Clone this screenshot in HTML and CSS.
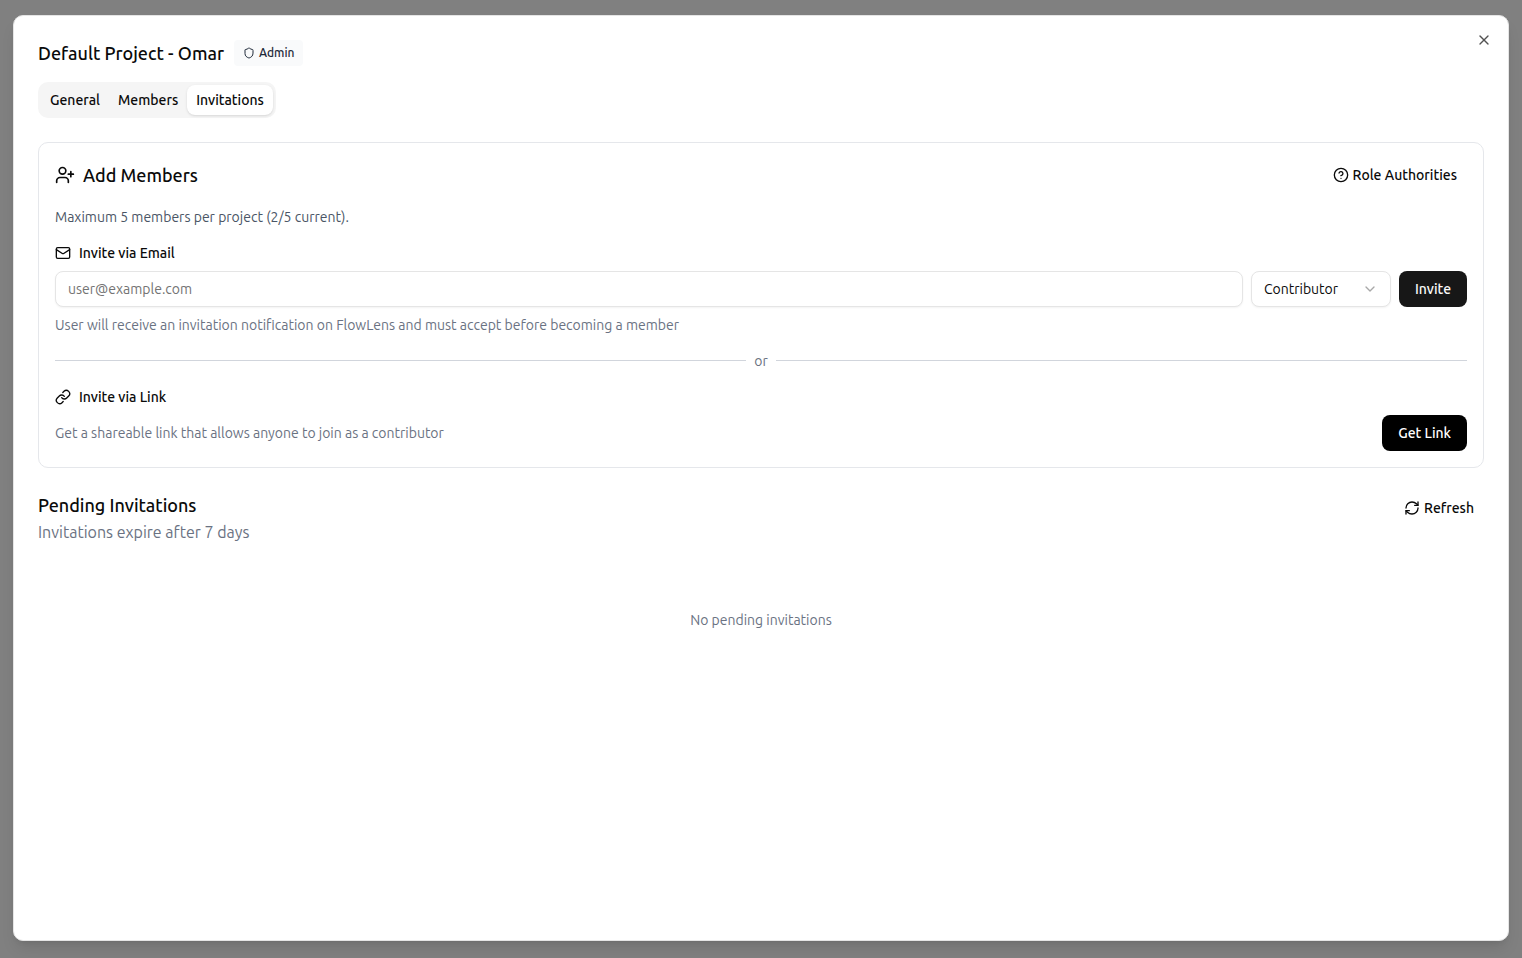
FILE: index.html
```
<!DOCTYPE html>
<html lang="en">
<head>
	<meta charset="UTF-8">
	<meta name="viewport" content="width=device-width, initial-scale=1">
	<title>Project settings</title>
	<link rel="stylesheet" href="styles.css">
</head>
<body>
	<div class="overlay">
		<main class="dialog" role="dialog" aria-labelledby="dialog-title">
			<button class="close" type="button" aria-label="Close">
				<svg class="icon" viewBox="0 0 24 24"><path d="M18 6 6 18"/><path d="m6 6 12 12"/></svg>
			</button>

			<header class="dialog-header">
				<h1 class="title" id="dialog-title">Default Project - Omar</h1>
				<span class="badge">
					<svg class="icon icon-xs" viewBox="0 0 24 24"><path d="M20 13c0 5-3.5 7.5-7.66 8.95a1 1 0 0 1-.67-.01C7.5 20.5 4 18 4 13V6a1 1 0 0 1 1-1c2 0 4.5-1.2 6.24-2.72a1.17 1.17 0 0 1 1.52 0C14.51 3.81 17 5 19 5a1 1 0 0 1 1 1z"/></svg>
					Admin
				</span>
			</header>

			<div class="tabs" role="tablist">
				<button class="tab" type="button" role="tab" aria-selected="false">General</button>
				<button class="tab" type="button" role="tab" aria-selected="false">Members</button>
				<button class="tab active" type="button" role="tab" aria-selected="true">Invitations</button>
			</div>

			<section class="card">
				<div class="card-header">
					<h2 class="title title-icon">
						<svg class="icon icon-lg" viewBox="0 0 24 24"><path d="M16 21v-2a4 4 0 0 0-4-4H6a4 4 0 0 0-4 4v2"/><circle cx="9" cy="7" r="4"/><path d="M19 8v6"/><path d="M22 11h-6"/></svg>
						Add Members
					</h2>
					<button class="btn btn-ghost" type="button">
						<svg class="icon" viewBox="0 0 24 24"><circle cx="12" cy="12" r="10"/><path d="M9.09 9a3 3 0 0 1 5.83 1c0 2-3 3-3 3"/><path d="M12 17h.01"/></svg>
						Role Authorities
					</button>
				</div>

				<p class="limit">Maximum 5 members per project (2/5 current).</p>

				<form class="group">
					<label class="label" for="email">
						<svg class="icon" viewBox="0 0 24 24"><rect x="2" y="4" width="20" height="16" rx="2"/><path d="m22 7-8.97 5.7a1.94 1.94 0 0 1-2.06 0L2 7"/></svg>
						Invite via Email
					</label>
					<div class="row">
						<input class="input" id="email" type="email" placeholder="user@example.com">
						<div class="select">
							<select aria-label="Role">
								<option>Contributor</option>
								<option>Admin</option>
							</select>
							<svg class="icon chevron" viewBox="0 0 24 24"><path d="m6 9 6 6 6-6"/></svg>
						</div>
						<button class="btn btn-primary" type="button">Invite</button>
					</div>
					<p class="hint">User will receive an invitation notification on FlowLens and must accept before becoming a member</p>
				</form>

				<div class="divider">or</div>

				<div class="group">
					<h3 class="label">
						<svg class="icon" viewBox="0 0 24 24"><path d="M10 13a5 5 0 0 0 7.54.54l3-3a5 5 0 0 0-7.07-7.07l-1.72 1.71"/><path d="M14 11a5 5 0 0 0-7.54-.54l-3 3a5 5 0 0 0 7.07 7.07l1.71-1.71"/></svg>
						Invite via Link
					</h3>
					<div class="row row-between">
						<p class="hint">Get a shareable link that allows anyone to join as a contributor</p>
						<button class="btn btn-black" type="button">Get Link</button>
					</div>
				</div>
			</section>

			<section class="pending">
				<div class="pending-header">
					<div>
						<h2 class="title">Pending Invitations</h2>
						<p class="subtitle">Invitations expire after 7 days</p>
					</div>
					<button class="btn btn-ghost" type="button">
						<svg class="icon" viewBox="0 0 24 24"><path d="M3 12a9 9 0 0 1 9-9 9.75 9.75 0 0 1 6.74 2.74L21 8"/><path d="M21 3v5h-5"/><path d="M21 12a9 9 0 0 1-9 9 9.75 9.75 0 0 1-6.74-2.74L3 16"/><path d="M8 16H3v5"/></svg>
						Refresh
					</button>
				</div>
				<p class="empty">No pending invitations</p>
			</section>
		</main>
	</div>
</body>
</html>
```
FILE: styles.css
```
* {
	box-sizing: border-box;
	margin: 0;
	padding: 0;
}
body {
	font-family: Ubuntu, "Noto Sans", sans-serif;
	font-size: 14px;
	line-height: 20px;
	color: #0a0a0a;
}
button, input, select {
	font: inherit;
	color: inherit;
}
button {
	border: 0;
	background: none;
	cursor: pointer;
}

.overlay {
	display: flex;
	min-height: 100vh;
	padding: 15px 13px 17px;
	background: #808080;
}
.dialog {
	position: relative;
	flex: 1;
	min-width: 0;
	padding: 24px;
	background: #fff;
	border: 1px solid #e5e5e5;
	border-radius: 10px;
	box-shadow: 0 10px 15px -3px rgba(0, 0, 0, .1), 0 4px 6px -4px rgba(0, 0, 0, .1);
}
.close {
	position: absolute;
	top: 16px;
	right: 16px;
	width: 16px;
	height: 16px;
	opacity: .7;
}

.icon {
	display: block;
	flex: none;
	width: 16px;
	height: 16px;
	fill: none;
	stroke: currentColor;
	stroke-width: 2;
	stroke-linecap: round;
	stroke-linejoin: round;
}
.icon-xs {
	width: 12px;
	height: 12px;
}
.icon-lg {
	width: 20px;
	height: 20px;
}

.dialog-header {
	display: flex;
	align-items: center;
	gap: 10px;
	margin-bottom: 16px;
}
.title {
	font-size: 18px;
	line-height: 26px;
	font-weight: 500;
}
.title-icon {
	display: flex;
	align-items: center;
	gap: 8px;
}
.badge {
	display: flex;
	align-items: center;
	gap: 4px;
	padding: 4px 9px;
	font-size: 12px;
	line-height: 18px;
	font-weight: 500;
	color: #1e2939;
	background: #f9fafb;
	border-radius: 4px;
}

.tabs {
	display: inline-flex;
	height: 36px;
	padding: 3px;
	background: #f5f5f5;
	border-radius: 10px;
}
.tab {
	padding: 0 9px;
	font-weight: 500;
	border-radius: 8px;
}
.tab.active {
	background: #fff;
	box-shadow: 0 1px 3px rgba(0, 0, 0, .1), 0 1px 2px -1px rgba(0, 0, 0, .1);
}

.card {
	display: flex;
	flex-direction: column;
	gap: 16px;
	margin: 24px 0;
	padding: 16px;
	border: 1px solid #e5e7eb;
	border-radius: 10px;
}
.card-header, .pending-header {
	display: flex;
	align-items: center;
	justify-content: space-between;
}
.pending-header {
	align-items: flex-start;
}
.limit {
	color: #4a5565;
}
.hint, .subtitle, .empty {
	color: #6a7282;
}
.group {
	display: flex;
	flex-direction: column;
	gap: 8px;
}
.label {
	display: flex;
	align-items: center;
	gap: 8px;
	font-size: 14px;
	font-weight: 500;
}
.row {
	display: flex;
	align-items: center;
	gap: 8px;
}
.row-between {
	justify-content: space-between;
}

.input, .select select {
	height: 36px;
	padding: 0 12px;
	background: #fff;
	border: 1px solid #e5e5e5;
	border-radius: 8px;
	box-shadow: 0 1px 2px rgba(0, 0, 0, .05);
}
.input {
	flex: 1;
	min-width: 0;
}
.input::placeholder {
	color: #737373;
}
.select {
	position: relative;
	width: 140px;
}
.select select {
	width: 100%;
	appearance: none;
}
.chevron {
	position: absolute;
	top: 10px;
	right: 13px;
	opacity: .35;
	pointer-events: none;
}

.btn {
	display: flex;
	align-items: center;
	justify-content: center;
	gap: 4px;
	height: 36px;
	padding: 0 16px;
	font-weight: 500;
	border-radius: 8px;
}
.btn-primary {
	color: #fafafa;
	background: #171717;
}
.btn-black {
	color: #fff;
	background: #000;
}
.btn-ghost {
	height: 32px;
	padding: 0 10px;
}

.divider {
	display: flex;
	align-items: center;
	gap: 8px;
	color: #6a7282;
}
.divider::before, .divider::after {
	content: "";
	flex: 1;
	height: 2px;
	border-top: 1px solid #d1d5dc;
}

.subtitle {
	margin-top: 2px;
	font-size: 16px;
	line-height: 24px;
}
.empty {
	padding: 66px 0;
	text-align: center;
}
```
